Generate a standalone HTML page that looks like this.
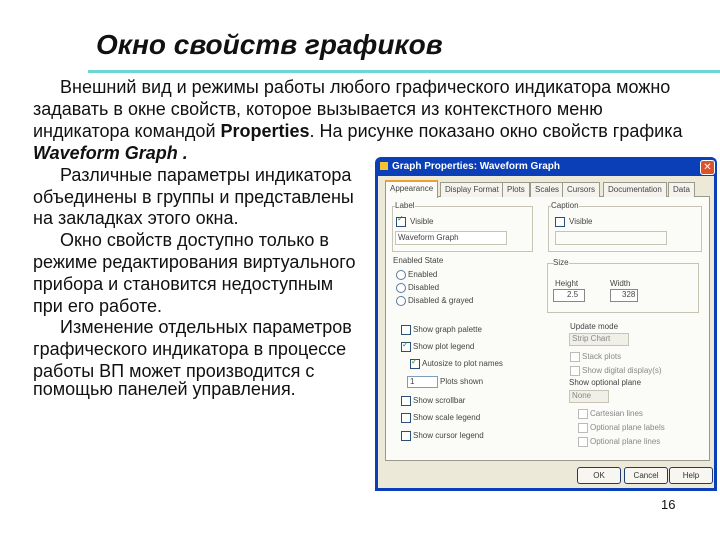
<!DOCTYPE html>
<html><head><meta charset="utf-8"><style>
body{margin:0;width:720px;height:540px;background:#fff;position:relative;overflow:hidden;font-family:"Liberation Sans",Arial,sans-serif}
.t{position:absolute;white-space:nowrap;font-size:18px;color:#111;line-height:20px}
.c{font-size:18px}
.d{position:absolute;font-size:8px;color:#444;white-space:nowrap;font-family:"Liberation Sans",sans-serif}
.cb{position:absolute;width:8px;height:8px;border:1px solid #2a4f7a;background:#fff}
.rb{position:absolute;width:8px;height:8px;border:1px solid #5a7a9a;border-radius:50%;background:#fff}
.box{position:absolute;border:1px solid #c8c4b4}
.btn{position:absolute;top:467px;height:15px;width:42px;border:1px solid #203a70;border-radius:3px;background:#f7f6f0;font-size:8px;text-align:center;line-height:15px;color:#333}
.tab{position:absolute;top:182px;height:14px;border:1px solid #9a9a8a;border-bottom:none;background:#f4f3ee;font-size:8px;line-height:14px;padding:0 4px;color:#444}
</style></head><body>
<div class="t" style="left:96px;top:30px;font-size:28px;font-weight:bold;font-style:italic;line-height:30px">Окно свойств графиков</div>
<div style="position:absolute;left:88px;top:70px;width:632px;height:3px;background:#6fd6d8"></div>
<div class="t" style="left:60px;top:77px">Внешний вид и режимы работы любого графического индикатора можно</div>
<div class="t" style="left:33px;top:99px">задавать в окне свойств, которое вызывается из контекстного меню</div>
<div class="t" style="left:33px;top:121px">индикатора командой <b>Properties</b>. На рисунке показано окно свойств графика</div>
<div class="t" style="left:33px;top:143px;font-weight:bold;font-style:italic">Waveform Graph .</div>
<div class="t c" style="left:60px;top:165px">Различные параметры индикатора</div>
<div class="t c" style="left:33px;top:187px">объединены в группы и представлены</div>
<div class="t c" style="left:33px;top:208px">на закладках этого окна.</div>
<div class="t c" style="left:60px;top:230px">Окно свойств доступно только в</div>
<div class="t c" style="left:33px;top:252px">режиме редактирования виртуального</div>
<div class="t c" style="left:33px;top:274px">прибора и становится недоступным</div>
<div class="t c" style="left:33px;top:296px">при его работе.</div>
<div class="t c" style="left:60px;top:317px">Изменение отдельных параметров</div>
<div class="t c" style="left:33px;top:339px">графического индикатора в процессе</div>
<div class="t c" style="left:33px;top:361px">работы ВП может производится с</div>
<div class="t c" style="left:33px;top:379px">помощью панелей управления.</div>

<div style="position:absolute;left:375px;top:157px;width:342px;height:334px;background:#0a3fb8;border-radius:6px 6px 0 0"></div>
<div style="position:absolute;left:378px;top:176px;width:336px;height:312px;background:#ece9d8"></div>
<div style="position:absolute;left:378px;top:159px;width:280px;height:16px;color:#fff;font-weight:bold;font-size:10px;line-height:16px;padding-left:14px">Graph Properties: Waveform Graph</div>
<div style="position:absolute;left:380px;top:162px;width:8px;height:8px;background:#f4c430"></div>
<div style="position:absolute;left:700px;top:160px;width:13px;height:13px;background:#d9542c;border:1px solid #fff;border-radius:3px;color:#fff;font-size:10px;line-height:13px;text-align:center">✕</div>
<div style="position:absolute;left:385px;top:196px;width:323px;height:263px;background:#fbfbf8;border:1px solid #9a9a8a"></div>
<div class="tab" style="left:385px;top:180px;height:16px;background:#fbfbf8;border-top:2px solid #f0a030">Appearance</div>
<div class="tab" style="left:440px">Display Format</div>
<div class="tab" style="left:502px">Plots</div>
<div class="tab" style="left:530px">Scales</div>
<div class="tab" style="left:562px">Cursors</div>
<div class="tab" style="left:603px">Documentation</div>
<div class="tab" style="left:668px">Data</div>
<div class="box" style="left:392px;top:206px;width:139px;height:44px"></div>
<div class="d" style="left:395px;top:201px;background:#fbfbf8">Label</div>
<div class="cb" style="left:396px;top:217px"></div><div class="d" style="left:397px;top:214px;color:#2a8a2a">✓</div>
<div class="d" style="left:410px;top:217px">Visible</div>
<div class="box" style="left:395px;top:231px;width:110px;height:12px;background:#fff"></div>
<div class="d" style="left:398px;top:233px">Waveform Graph</div>
<div class="box" style="left:548px;top:206px;width:152px;height:44px"></div>
<div class="d" style="left:551px;top:201px;background:#fbfbf8">Caption</div>
<div class="cb" style="left:555px;top:217px"></div><div class="d" style="left:569px;top:217px">Visible</div>
<div class="box" style="left:555px;top:231px;width:110px;height:12px"></div>
<div class="d" style="left:393px;top:256px">Enabled State</div>
<div class="rb" style="left:396px;top:270px"></div><div class="d" style="left:408px;top:270px">Enabled</div>
<div class="rb" style="left:396px;top:283px"></div><div class="d" style="left:408px;top:283px">Disabled</div>
<div class="rb" style="left:396px;top:296px"></div><div class="d" style="left:408px;top:296px">Disabled &amp; grayed</div>
<div class="box" style="left:547px;top:263px;width:150px;height:48px"></div>
<div class="d" style="left:553px;top:258px;background:#fbfbf8">Size</div>
<div class="d" style="left:555px;top:279px">Height</div><div class="d" style="left:610px;top:279px">Width</div>
<div class="box" style="left:553px;top:289px;width:30px;height:11px;background:#fff;border-color:#888"></div><div class="d" style="left:567px;top:290px">2.5</div>
<div class="box" style="left:610px;top:289px;width:26px;height:11px;background:#fff;border-color:#888"></div><div class="d" style="left:622px;top:290px">328</div>
<div class="cb" style="left:401px;top:325px"></div><div class="d" style="left:413px;top:325px">Show graph palette</div>
<div class="cb" style="left:401px;top:342px"></div><div class="d" style="left:402px;top:340px;color:#2a8a2a">✓</div><div class="d" style="left:413px;top:342px">Show plot legend</div>
<div class="cb" style="left:410px;top:359px"></div><div class="d" style="left:411px;top:357px;color:#2a8a2a">✓</div><div class="d" style="left:422px;top:359px">Autosize to plot names</div>
<div class="box" style="left:407px;top:376px;width:29px;height:10px;background:#fff;border-color:#7f9db9"></div><div class="d" style="left:410px;top:377px">1</div><div class="d" style="left:440px;top:377px">Plots shown</div>
<div class="cb" style="left:401px;top:396px"></div><div class="d" style="left:413px;top:396px">Show scrollbar</div>
<div class="cb" style="left:401px;top:413px"></div><div class="d" style="left:413px;top:413px">Show scale legend</div>
<div class="cb" style="left:401px;top:431px"></div><div class="d" style="left:413px;top:431px">Show cursor legend</div>
<div class="d" style="left:570px;top:322px">Update mode</div>
<div class="box" style="left:569px;top:333px;width:58px;height:11px;background:#f0efe8"></div><div class="d" style="left:572px;top:334px;color:#888">Strip Chart</div>
<div class="cb" style="left:570px;top:352px;border-color:#bbb"></div><div class="d" style="left:582px;top:352px;color:#888">Stack plots</div>
<div class="cb" style="left:570px;top:366px;border-color:#bbb"></div><div class="d" style="left:582px;top:366px;color:#888">Show digital display(s)</div>
<div class="d" style="left:569px;top:378px">Show optional plane</div>
<div class="box" style="left:569px;top:390px;width:38px;height:11px;background:#f0efe8"></div><div class="d" style="left:572px;top:391px;color:#888">None</div>
<div class="cb" style="left:578px;top:409px;border-color:#bbb"></div><div class="d" style="left:590px;top:409px;color:#888">Cartesian lines</div>
<div class="cb" style="left:578px;top:423px;border-color:#bbb"></div><div class="d" style="left:590px;top:423px;color:#888">Optional plane labels</div>
<div class="cb" style="left:578px;top:437px;border-color:#bbb"></div><div class="d" style="left:590px;top:437px;color:#888">Optional plane lines</div>
<div class="btn" style="left:577px">OK</div>
<div class="btn" style="left:624px">Cancel</div>
<div class="btn" style="left:669px">Help</div>
<div class="t" style="left:661px;top:495px;font-size:13px">16</div>
</body></html>
